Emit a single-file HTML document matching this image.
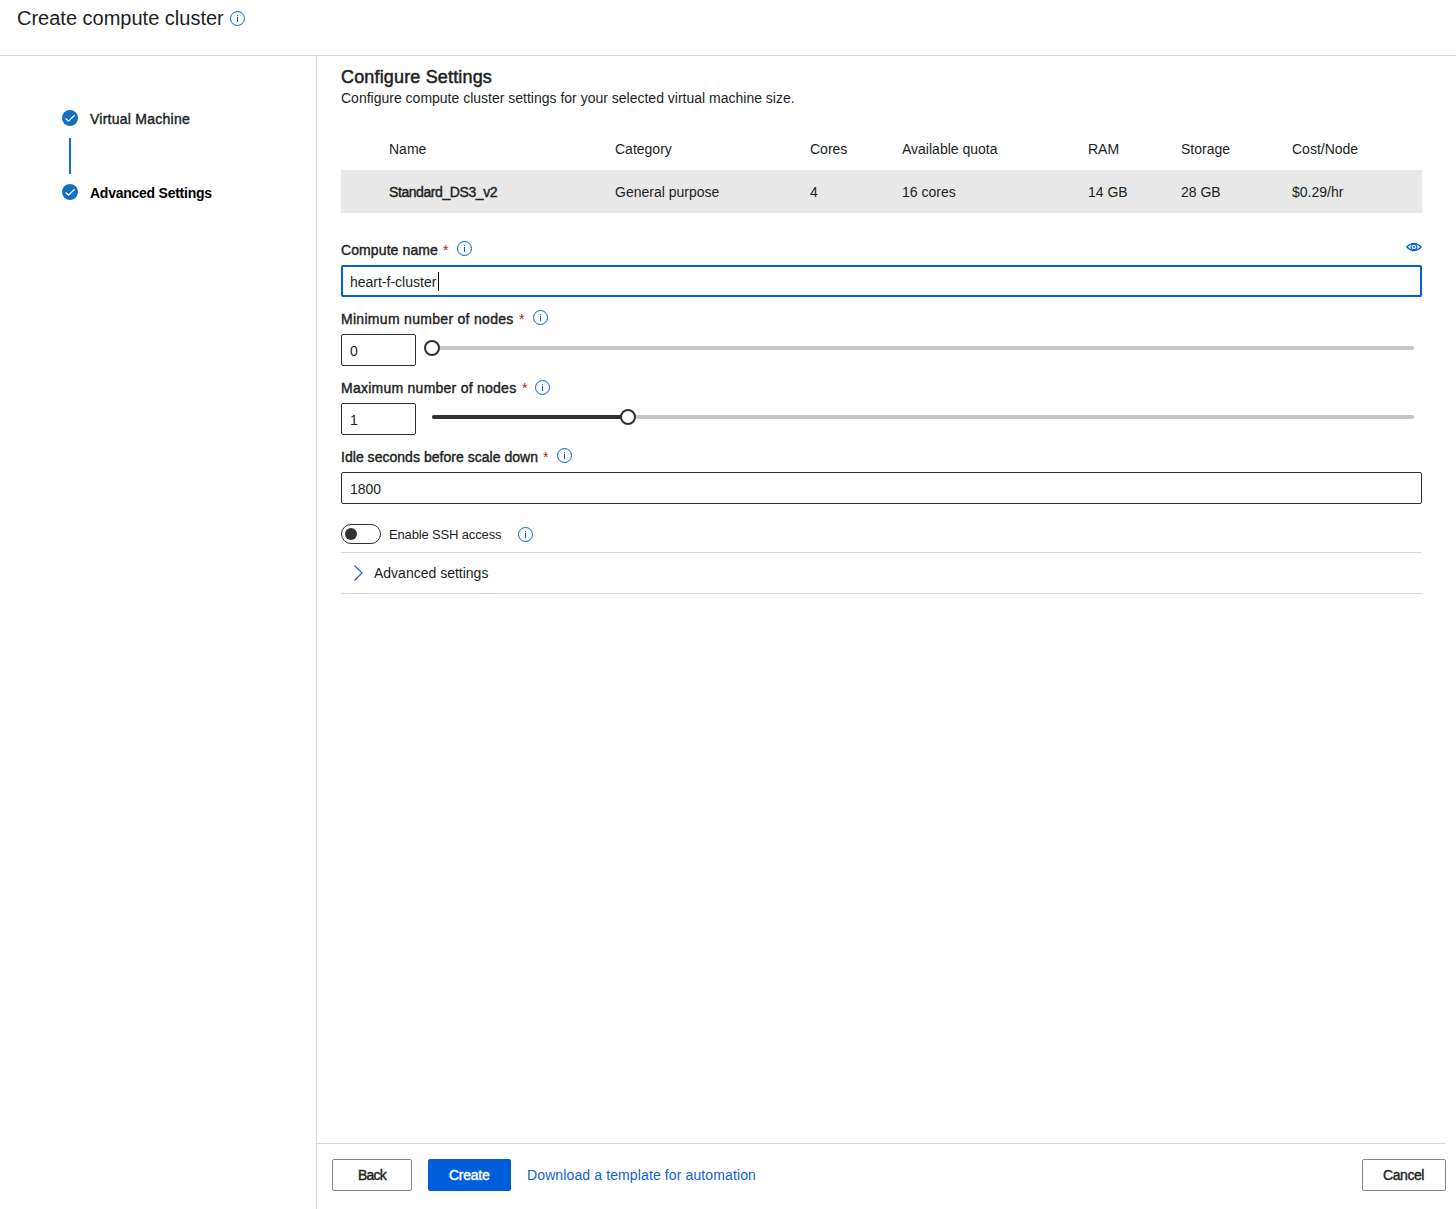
<!DOCTYPE html>
<html><head><meta charset="utf-8">
<style>
html,body{margin:0;padding:0;background:#fff;width:1456px;height:1209px;overflow:hidden;position:relative;}
body{font-family:"Liberation Sans",sans-serif;color:#201f1e;}
.a{position:absolute;}
.t{position:absolute;white-space:nowrap;font-size:14px;line-height:16px;}
.b{font-weight:700;}
.sb{font-weight:400;-webkit-text-stroke-width:0.4px;}
.hl{position:absolute;height:1px;background:#d8d8d8;}
.info{position:absolute;width:16px;height:16px;}
.ast{position:absolute;font-size:14px;line-height:16px;color:#a4262c;font-weight:400;}
.inp{position:absolute;box-sizing:border-box;border:1px solid #323130;border-radius:2px;background:#fff;}
.thumb{position:absolute;box-sizing:border-box;width:16px;height:16px;border:2px solid #323130;border-radius:50%;background:#fff;}
.track{position:absolute;height:4px;border-radius:2px;background:#c8c6c4;}
.btn{position:absolute;box-sizing:border-box;height:32px;border-radius:2px;}
</style></head><body>

<!-- header -->
<div class="t" style="left:17px;top:6px;font-size:20px;line-height:24px;color:#201f1e;">Create compute cluster</div>
<svg class="info" style="left:230px;top:11px;" viewBox="0 0 16 16"><circle cx="7.5" cy="7.5" r="7" fill="none" stroke="#005edb" stroke-width="1"/><rect x="7" y="4" width="1" height="1.2" fill="#005edb"/><rect x="7" y="6" width="1" height="5" fill="#005edb"/></svg>
<div class="hl" style="left:0;top:55px;width:1456px;"></div>
<div class="a" style="left:316px;top:55px;width:1px;height:1154px;background:#d8d8d8;"></div>

<!-- steps -->
<svg class="a" style="left:62px;top:110px;" width="16" height="16" viewBox="0 0 16 16"><circle cx="8" cy="8" r="8" fill="#136fc2"/><path d="M3.6 8.4 L6.6 11.2 L12.6 5.3" fill="none" stroke="#fff" stroke-width="1.3"/></svg>
<div class="t sb" style="left:90px;top:111px;letter-spacing:0.25px;">Virtual Machine</div>
<div class="a" style="left:69px;top:138px;width:2px;height:36px;background:#136fc2;"></div>
<svg class="a" style="left:62px;top:184px;" width="16" height="16" viewBox="0 0 16 16"><circle cx="8" cy="8" r="8" fill="#136fc2"/><path d="M3.6 8.4 L6.6 11.2 L12.6 5.3" fill="none" stroke="#fff" stroke-width="1.3"/></svg>
<div class="t b" style="left:90px;top:185px;letter-spacing:-0.25px;color:#000;">Advanced Settings</div>

<!-- content heading -->
<div class="t sb" style="left:341px;top:66px;font-size:18px;line-height:22px;letter-spacing:0.16px;-webkit-text-stroke-width:0.5px;">Configure Settings</div>
<div class="t" style="left:341px;top:90px;">Configure compute cluster settings for your selected virtual machine size.</div>

<!-- table -->
<div class="t" style="left:389px;top:141px;">Name</div>
<div class="t" style="left:615px;top:141px;">Category</div>
<div class="t" style="left:810px;top:141px;">Cores</div>
<div class="t" style="left:902px;top:141px;">Available quota</div>
<div class="t" style="left:1088px;top:141px;">RAM</div>
<div class="t" style="left:1181px;top:141px;">Storage</div>
<div class="t" style="left:1292px;top:141px;">Cost/Node</div>
<div class="a" style="left:341px;top:170px;width:1081px;height:43px;background:#e8e8e8;"></div>
<div class="t sb" style="left:389px;top:184px;letter-spacing:-0.42px;">Standard_DS3_v2</div>
<div class="t" style="left:615px;top:184px;">General purpose</div>
<div class="t" style="left:810px;top:184px;">4</div>
<div class="t" style="left:902px;top:184px;">16 cores</div>
<div class="t" style="left:1088px;top:184px;">14 GB</div>
<div class="t" style="left:1181px;top:184px;">28 GB</div>
<div class="t" style="left:1292px;top:184px;">$0.29/hr</div>

<!-- compute name -->
<div class="t sb" style="left:341px;top:242px;letter-spacing:0.1px;">Compute name</div>
<div class="ast" style="left:443px;top:242px;">*</div>
<svg class="info" style="left:457px;top:241px;" viewBox="0 0 16 16"><circle cx="7.5" cy="7.5" r="7" fill="none" stroke="#005edb" stroke-width="1"/><rect x="7" y="4" width="1" height="1.2" fill="#005edb"/><rect x="7" y="6" width="1" height="5" fill="#005edb"/></svg>
<svg class="a" style="left:1406px;top:242px;" width="16" height="10" viewBox="0 0 16 10"><path d="M0.8 5 Q8 -2.2 15.2 5 Q8 12.2 0.8 5 Z" fill="none" stroke="#005edb" stroke-width="1.1"/><circle cx="8" cy="5" r="2.9" fill="none" stroke="#005edb" stroke-width="1.1"/><circle cx="8" cy="5" r="0.9" fill="#005edb"/></svg>
<div class="inp" style="left:341px;top:265px;width:1081px;height:32px;border:2px solid #005edb;"></div>
<div class="t" style="left:350px;top:274px;color:#201f1e;">heart-f-cluster</div>
<div class="a" style="left:438px;top:272px;width:1px;height:19px;background:#000;"></div>

<!-- min nodes -->
<div class="t sb" style="left:341px;top:311px;letter-spacing:0.3px;">Minimum number of nodes</div>
<div class="ast" style="left:519px;top:311px;">*</div>
<svg class="info" style="left:533px;top:310px;" viewBox="0 0 16 16"><circle cx="7.5" cy="7.5" r="7" fill="none" stroke="#005edb" stroke-width="1"/><rect x="7" y="4" width="1" height="1.2" fill="#005edb"/><rect x="7" y="6" width="1" height="5" fill="#005edb"/></svg>
<div class="inp" style="left:341px;top:334px;width:75px;height:32px;"></div>
<div class="t" style="left:350px;top:343px;">0</div>
<div class="track" style="left:432px;top:346px;width:982px;"></div>
<div class="thumb" style="left:424px;top:340px;"></div>

<!-- max nodes -->
<div class="t sb" style="left:341px;top:380px;letter-spacing:0.25px;">Maximum number of nodes</div>
<div class="ast" style="left:522px;top:380px;">*</div>
<svg class="info" style="left:535px;top:380px;" viewBox="0 0 16 16"><circle cx="7.5" cy="7.5" r="7" fill="none" stroke="#005edb" stroke-width="1"/><rect x="7" y="4" width="1" height="1.2" fill="#005edb"/><rect x="7" y="6" width="1" height="5" fill="#005edb"/></svg>
<div class="inp" style="left:341px;top:403px;width:75px;height:32px;"></div>
<div class="t" style="left:350px;top:412px;">1</div>
<div class="track" style="left:432px;top:415px;width:982px;"></div>
<div class="track" style="left:432px;top:415px;width:196px;background:#323130;"></div>
<div class="thumb" style="left:620px;top:409px;"></div>

<!-- idle seconds -->
<div class="t sb" style="left:341px;top:449px;letter-spacing:0.03px;">Idle seconds before scale down</div>
<div class="ast" style="left:543px;top:449px;">*</div>
<svg class="info" style="left:557px;top:448px;" viewBox="0 0 16 16"><circle cx="7.5" cy="7.5" r="7" fill="none" stroke="#005edb" stroke-width="1"/><rect x="7" y="4" width="1" height="1.2" fill="#005edb"/><rect x="7" y="6" width="1" height="5" fill="#005edb"/></svg>
<div class="inp" style="left:341px;top:472px;width:1081px;height:32px;"></div>
<div class="t" style="left:350px;top:481px;">1800</div>

<!-- toggle -->
<div class="a" style="left:341px;top:524px;width:40px;height:20px;box-sizing:border-box;border:1px solid #323130;border-radius:10px;"></div>
<div class="a" style="left:345px;top:528px;width:12px;height:12px;border-radius:50%;background:#323130;"></div>
<div class="t" style="left:389px;top:527px;font-size:13px;letter-spacing:-0.15px;">Enable SSH access</div>
<svg class="info" style="left:518px;top:527px;" viewBox="0 0 16 16"><circle cx="7.5" cy="7.5" r="7" fill="none" stroke="#005edb" stroke-width="1"/><rect x="7" y="4" width="1" height="1.2" fill="#005edb"/><rect x="7" y="6" width="1" height="5" fill="#005edb"/></svg>
<div class="hl" style="left:341px;top:552px;width:1081px;"></div>
<svg class="a" style="left:352px;top:564px;" width="12" height="18" viewBox="0 0 12 18"><path d="M2.5 1.5 L10 9 L2.5 16.5" fill="none" stroke="#2f4fd6" stroke-width="1.1"/></svg>
<div class="t" style="left:374px;top:565px;">Advanced settings</div>
<div class="hl" style="left:341px;top:593px;width:1081px;"></div>

<!-- footer -->
<div class="hl" style="left:316px;top:1143px;width:1130px;"></div>
<div class="btn" style="left:332px;top:1159px;width:80px;border:1px solid #8a8886;background:#fff;"></div>
<div class="t sb" style="left:358px;top:1167px;letter-spacing:-0.75px;color:#201f1e;">Back</div>
<div class="btn" style="left:428px;top:1159px;width:83px;background:#005edb;"></div>
<div class="t sb" style="left:449px;top:1167px;letter-spacing:-0.25px;color:#fff;">Create</div>
<div class="t" style="left:527px;top:1167px;letter-spacing:0.12px;color:#0f5fd8;">Download a template for automation</div>
<div class="btn" style="left:1362px;top:1159px;width:84px;border:1px solid #8a8886;background:#fff;"></div>
<div class="t sb" style="left:1383px;top:1167px;letter-spacing:-0.43px;color:#201f1e;">Cancel</div>

</body></html>
